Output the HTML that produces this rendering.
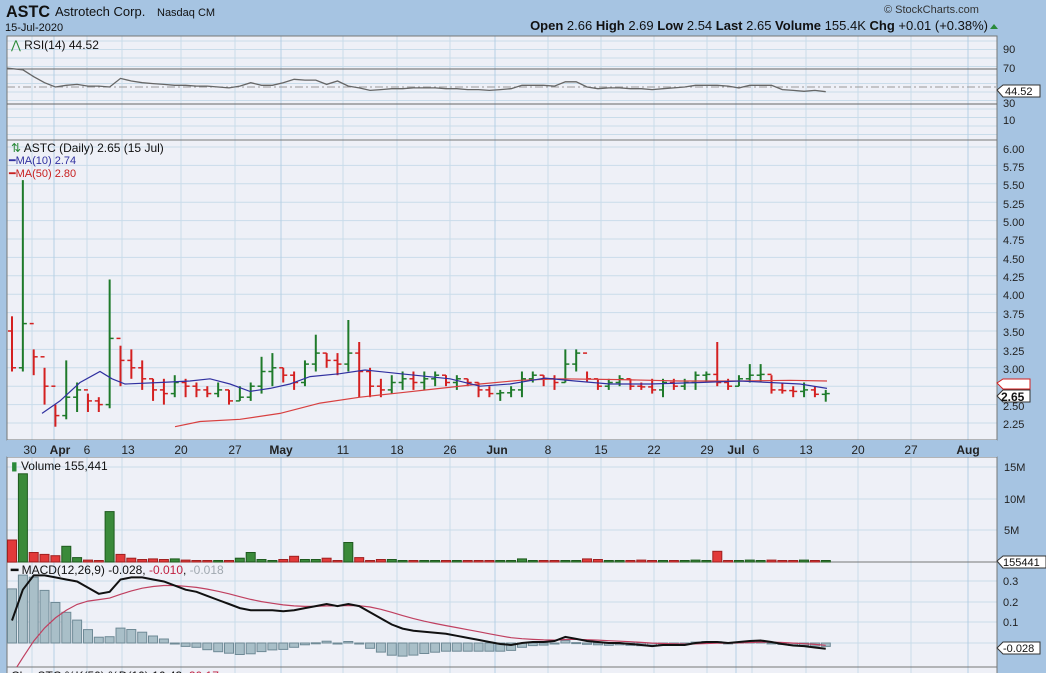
<!DOCTYPE html><html><head><meta charset="utf-8"><style>
body{margin:0;width:1046px;height:673px;overflow:hidden;background:#a6c4e2;font-family:"Liberation Sans",sans-serif}
svg{position:absolute;left:0;top:0}
</style></head><body>
<svg id="s" width="1046" height="673" xmlns="http://www.w3.org/2000/svg" font-family="Liberation Sans, sans-serif">
<rect width="1046" height="673" fill="#a6c4e2"/>
<text x="6" y="17" font-size="17" font-weight="bold" fill="#111" textLength="44" lengthAdjust="spacingAndGlyphs">ASTC</text>
<text x="55" y="16" font-size="13" fill="#111">Astrotech Corp.</text>
<text x="157" y="16" font-size="11" fill="#111">Nasdaq CM</text>
<text x="5" y="31" font-size="11" fill="#111">15-Jul-2020</text>
<text x="884" y="13" font-size="11" fill="#333">© StockCharts.com</text>
<text x="988" y="30" font-size="13" fill="#111" text-anchor="end"><tspan font-weight="bold">Open</tspan> 2.66 <tspan font-weight="bold">High</tspan> 2.69 <tspan font-weight="bold">Low</tspan> 2.54 <tspan font-weight="bold">Last</tspan> 2.65 <tspan font-weight="bold">Volume</tspan> 155.4K <tspan font-weight="bold">Chg</tspan> +0.01 (+0.38%)</text>
<polygon points="990,29 998,29 994,24" fill="#2a8a3a"/>
<g id="g"></g>
</svg>
<script>
var g=document.getElementById('g'),h='';
function R(x,y,w,hh,f,s){h+='<rect x="'+x+'" y="'+y+'" width="'+w+'" height="'+hh+'" fill="'+f+'"'+(s?' stroke="'+s+'"':'')+'/>';}
function L(x1,y1,x2,y2,c,w,d){h+='<line x1="'+x1+'" y1="'+y1+'" x2="'+x2+'" y2="'+y2+'" stroke="'+c+'" stroke-width="'+(w||1)+'"'+(d?' stroke-dasharray="'+d+'"':'')+'/>';}
function T(x,y,t,s,c,a,w){h+='<text x="'+x+'" y="'+y+'" font-size="'+(s||11)+'" fill="'+(c||'#111')+'"'+(a?' text-anchor="'+a+'"':'')+(w?' font-weight="bold"':'')+'>'+t+'</text>';}
function P(pts,c,w){h+='<polyline points="'+pts.join(' ')+'" fill="none" stroke="'+c+'" stroke-width="'+(w||1)+'"/>';}
var X0=7,X1=997,GC='#c9dcea',VX=[32,54,87,122,181,235,281,343,397,450,495,548,601,654,707,736,752,806,858,911,968];
var panels=[[36,140],[140,440],[457,562],[562,667],[667,680]];
panels.forEach(function(p){R(X0,p[0],X1-X0,p[1]-p[0],'#eef0f7');});
for(var y=41;y<140;y+=8.5)L(X0,y,X1,y,GC);
for(var p=6;p>=2.2;p-=0.25)L(X0,147+(6-p)*73.6,X1,147+(6-p)*73.6,GC);
[467,499,530].forEach(function(y){L(X0,y,X1,y,GC)});
[581,602,622,643].forEach(function(y){L(X0,y,X1,y,GC)});
VX.forEach(function(x){L(x,36,x,673,GC);});
[54,281,495,736,968].forEach(function(x){L(x,36,x,673,'#b5cfe4');});
panels.forEach(function(p){h+='<rect x="'+X0+'" y="'+p[0]+'" width="'+(X1-X0)+'" height="'+(p[1]-p[0])+'" fill="none" stroke="#777"/>';});
R(X0,440,X1-X0,17,'#a6c4e2');
var DL=[[30,'30'],[60,'Apr',1],[87,'6'],[128,'13'],[181,'20'],[235,'27'],[281,'May',1],[343,'11'],[397,'18'],[450,'26'],[497,'Jun',1],[548,'8'],[601,'15'],[654,'22'],[707,'29'],[736,'Jul',1],[756,'6'],[806,'13'],[858,'20'],[911,'27'],[968,'Aug',1]];
DL.forEach(function(d){T(d[0],454,d[1],12,'#222','middle',d[2]);});
L(X0,69,X1,69,'#666');L(X0,104,X1,104,'#666');L(X0,87,X1,87,'#999',1,'8,3,2,3');
[[90,53],[70,72],[30,107],[10,124]].forEach(function(a){T(1003,a[1],a[0],11,'#222');});
var rsi=[72,70,62,55,50,52,53,51,51,50,60,57,55,54,53,52,52,51,51,50,49,51,55,52,52,55,59,58,58,53,57,51,49,46,47,48,48,49,49,49,48,48,47,47,46,47,48,52,52,52,51,56,56,50,48,49,49,48,48,47,48,49,50,52,52,52,51,49,52,52,52,47,46,45,46,44.5];
var xs=[];for(var i=0;i<76;i++)xs.push(12+i*10.85);
P(rsi.map(function(v,i){return (i==0?7:xs[i])+','+(87-(v-50)*0.86).toFixed(1)}),'#666',1.3);
h+='<path d="M997,90 L1003,85 L1040,85 L1040,97 L1003,97 Z" fill="#fff" stroke="#333"/>';T(1005,95,'44.52',11,'#111');
T(11,49,'<tspan fill="#2a8a3a">⋀</tspan> RSI(14) 44.52',12,'#111');
var D=[[3.0,3.7,2.95],[3.6,5.55,2.95],[3.15,3.25,2.9],[2.75,3.0,2.5],[2.35,2.5,2.2],[2.6,3.1,2.3],[2.7,2.8,2.4],[2.55,2.65,2.4],[2.5,2.6,2.4],[3.4,4.2,2.45],[3.1,3.3,2.75],[3.0,3.25,2.85],[2.85,3.1,2.7],[2.7,2.85,2.55],[2.65,2.85,2.5],[2.8,2.9,2.6],[2.75,2.85,2.6],[2.7,2.8,2.6],[2.65,2.75,2.6],[2.7,2.8,2.6],[2.55,2.7,2.5],[2.6,2.75,2.55],[2.75,2.8,2.55],[2.95,3.15,2.65],[3.0,3.2,2.75],[2.9,3.0,2.8],[2.8,2.95,2.7],[3.05,3.1,2.75],[3.2,3.45,2.95],[3.1,3.2,3.0],[3.05,3.2,2.9],[3.2,3.65,2.95],[2.95,3.35,2.6],[2.75,3.0,2.6],[2.7,2.85,2.6],[2.8,2.9,2.65],[2.85,2.95,2.7],[2.8,2.95,2.7],[2.85,2.95,2.7],[2.9,2.95,2.75],[2.8,2.9,2.75],[2.85,2.9,2.7],[2.8,2.85,2.75],[2.7,2.8,2.6],[2.65,2.75,2.6],[2.66,2.7,2.55],[2.7,2.75,2.6],[2.85,2.95,2.6],[2.9,2.95,2.8],[2.85,2.9,2.75],[2.8,2.9,2.7],[3.05,3.25,2.8],[3.2,3.25,2.95],[2.85,2.95,2.8],[2.75,2.85,2.7],[2.8,2.85,2.7],[2.85,2.9,2.75],[2.75,2.85,2.7],[2.74,2.8,2.7],[2.7,2.85,2.65],[2.8,2.85,2.6],[2.75,2.85,2.7],[2.8,2.85,2.7],[2.9,2.95,2.7],[2.91,2.95,2.8],[2.8,3.35,2.75],[2.75,2.85,2.7],[2.85,2.9,2.75],[2.9,3.05,2.8],[2.91,3.05,2.8],[2.7,2.9,2.65],[2.69,2.8,2.65],[2.68,2.75,2.6],[2.7,2.8,2.6],[2.64,2.75,2.6],[2.65,2.7,2.54]];
function py(p){return (147+(6-p)*73.6).toFixed(1);}
var prev=3.5;
D.forEach(function(d,i){var c=d[0]>=prev?'#1e7a2a':'#d42020',x=xs[i];L(x,py(d[1]),x,py(d[2]),c,2);L(x-4,py(prev),x,py(prev),c,1.5);L(x,py(d[0]),x+4,py(d[0]),c,1.5);prev=d[0];});
var ma10=[[42,2.38],[60,2.55],[80,2.8],[100,2.95],[112,2.85],[125,2.78],[160,2.8],[190,2.82],[210,2.85],[230,2.78],[250,2.68],[270,2.72],[290,2.78],[310,2.88],[340,2.92],[365,2.97],[400,2.92],[450,2.85],[480,2.75],[510,2.78],[545,2.86],[575,2.82],[610,2.78],[650,2.78],[700,2.8],[740,2.82],[770,2.8],[800,2.78],[827,2.72]];
var ma50=[[175,2.2],[200,2.27],[240,2.3],[280,2.38],[320,2.52],[360,2.6],[400,2.66],[440,2.72],[480,2.78],[520,2.83],[560,2.85],[620,2.84],[680,2.82],[740,2.82],[790,2.83],[827,2.82]];
P(ma50.map(function(a){return a[0]+','+py(a[1])}),'#d84040',1.2);
P(ma10.map(function(a){return a[0]+','+py(a[1])}),'#3030a0',1.2);
[[6,153],[5.75,171],[5.5,189],[5.25,208],[5,226],[4.75,244],[4.5,263],[4.25,281],[4,299],[3.75,318],[3.5,336],[3.25,355],[3,373],[2.75,391],[2.5,410],[2.25,428]].forEach(function(a){T(1003,a[1],a[0].toFixed(2),11,'#222');});
h+='<path d="M997,383 L1003,379 L1030,379 L1030,389 L1003,389 Z" fill="#fff" stroke="#d42020"/>';
h+='<path d="M997,396 L1003,390 L1030,390 L1030,402 L1003,402 Z" fill="#fff" stroke="#333"/>';T(1001,401,'2.65',12,'#111','',1);
T(11,152,'<tspan fill="#2a8a3a">⇅</tspan> ASTC (Daily) 2.65 (15 Jul)',12,'#111');
T(9,164,'<tspan>━</tspan>MA(10) 2.74',11,'#3030a0');T(9,177,'<tspan>━</tspan>MA(50) 2.80',11,'#c82020');
var V=[3.5,14,1.5,1.2,1.0,2.5,0.7,0.3,0.2,8.0,1.2,0.6,0.4,0.5,0.4,0.5,0.3,0.1,0.1,0.1,0.1,0.6,1.5,0.4,0.2,0.4,0.9,0.4,0.4,0.6,0.2,3.1,0.7,0.2,0.4,0.4,0.1,0.1,0.1,0.1,0.1,0.1,0.1,0.1,0.1,0.1,0.1,0.5,0.1,0.1,0.2,0.2,0.1,0.5,0.4,0.2,0.2,0.1,0.3,0.1,0.2,0.1,0.2,0.3,0.1,1.7,0.1,0.1,0.3,0.1,0.3,0.1,0.1,0.3,0.1,0.1];
prev=3.5;
V.forEach(function(v,i){var c=D[i][0]>=prev?'#3a8a3a':'#e23a3a';prev=D[i][0];var hh=Math.max(1.5,v*6.3);R((xs[i]-4.5).toFixed(1),(562-hh).toFixed(1),9,hh.toFixed(1),c,c=='#3a8a3a'?'#1e5a1e':'#a02020');});
[[467,'15M'],[499,'10M'],[530,'5M']].forEach(function(a){T(1004,a[0]+4,a[1],11,'#222');});
h+='<path d="M997,561 L1003,556 L1046,556 L1046,568 L1003,568 Z" fill="#fff" stroke="#333"/>';T(1003,566,'155441',11,'#111');
T(11,470,'<tspan fill="#2a8a3a">▮</tspan> Volume 155,441',12,'#111');
var M=[0.11,0.26,0.33,0.33,0.32,0.31,0.30,0.27,0.24,0.25,0.31,0.32,0.32,0.31,0.30,0.28,0.26,0.25,0.23,0.21,0.19,0.17,0.16,0.16,0.16,0.155,0.16,0.17,0.18,0.19,0.18,0.19,0.18,0.15,0.12,0.09,0.07,0.06,0.055,0.05,0.045,0.035,0.025,0.015,0.005,-0.005,-0.01,0,0.005,0.005,0.01,0.03,0.02,0.01,0.005,0,0,-0.005,-0.01,-0.015,-0.01,-0.01,-0.01,0,0.005,0.005,0,0.005,0.01,0.012,0.005,-0.005,-0.012,-0.015,-0.022,-0.028];
var S=[],s=-0.22;M.forEach(function(m){s=s+(m-s)*0.2;S.push(s);});
function my(v){return (643-v*205).toFixed(1);}
h+='<clipPath id="mc"><rect x="7" y="562" width="990" height="105"/></clipPath><g clip-path="url(#mc)">';
M.forEach(function(m,i){var d=m-S[i];var y1=643-Math.max(d,0)*205,y2=643-Math.min(d,0)*205;R((xs[i]-4.5).toFixed(1),y1.toFixed(1),9,Math.max(1,y2-y1).toFixed(1),'#a9bfc8','#6f8a96');});
P(S.map(function(v,i){return xs[i]+','+my(v)}),'#c04060',1.2);
P(M.map(function(v,i){return xs[i]+','+my(v)}),'#111',2);
h+='</g>';
[[581,'0.3'],[602,'0.2'],[622,'0.1']].forEach(function(a){T(1003,a[0]+4,a[1],11,'#222');});
h+='<path d="M997,648 L1003,642 L1040,642 L1040,654 L1003,654 Z" fill="#fff" stroke="#333"/>';T(1003,652,'-0.028',11,'#111');
T(11,574,'<tspan font-weight="bold">━</tspan> MACD(12,26,9) -0.028, <tspan fill="#c02040">-0.010</tspan>, <tspan fill="#a0a8b0">-0.018</tspan>',12,'#111');
T(11,680,'Clv...STC %K(50) %D(10) 16.43, <tspan fill="#c02040">20.17</tspan>',12,'#111');
g.innerHTML=h;
</script>
</body></html>
